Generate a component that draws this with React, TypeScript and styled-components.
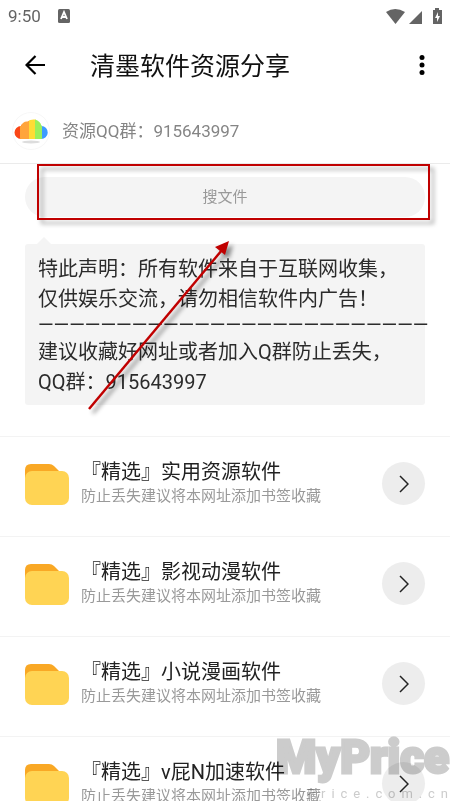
import React from "react";
import styled, { createGlobalStyle } from "styled-components";

const GlobalStyle = createGlobalStyle`
  * { box-sizing: border-box; }
  body { margin: 0; background: #fff; color: #222; font-family: Roboto, "Noto Sans CJK SC", sans-serif; }
  button, input { font-family: inherit; }
`;

const Screen = styled.div`
  position: relative;
  display: flex;
  flex-direction: column;
  height: 100vh;
  overflow: hidden;
`;

const StatusBar = styled.div`
  display: flex;
  align-items: center;
  justify-content: space-between;
  flex: none;
  height: 30px;
  padding: 2px 8px 0;
  color: #646464;
  font-size: 17px;
  line-height: 20px;
`;

const StatusGroup = styled.div<{ $gap: number }>`
  display: flex;
  align-items: center;
  gap: ${(p) => p.$gap}px;
`;

const AppBar = styled.header`
  display: flex;
  align-items: center;
  flex: none;
  height: 70px;
  padding: 0 16px 0 20px;
`;

const IconButton = styled.button`
  display: flex;
  align-items: center;
  justify-content: center;
  width: 24px;
  height: 40px;
  padding: 0;
  border: 0;
  background: none;
  color: #000;
  cursor: pointer;
`;

const BackButton = styled(IconButton)`
  width: 30px;
`;

const Title = styled.h1`
  flex: 1;
  margin: 0 0 0 40px;
  padding-top: 3px;
  color: #111;
  font-size: 25px;
  font-weight: 400;
  line-height: 36px;
`;

const Content = styled.main`
  position: relative;
  flex: 1;
  overflow-y: auto;
  scrollbar-width: none;
`;

const GroupRow = styled.div`
  display: flex;
  align-items: center;
  gap: 12px;
  height: 64px;
  padding: 0 12px 2px;
  border-bottom: 1px solid #ebebeb;
  color: #858585;
  font-size: 17px;
  line-height: 24px;
`;

const SearchInput = styled.input`
  display: block;
  width: calc(100% - 50px);
  height: 40px;
  margin: 13px 25px 0;
  border: 0;
  border-radius: 20px;
  background: #f4f4f4;
  color: #333;
  font-size: 15px;
  text-align: center;
  outline: none;
  &::placeholder { color: #999; opacity: 1; }
`;

const Notice = styled.section`
  position: relative;
  margin: 27px 25px 31px;
  padding: 10px 12px 8px 13px;
  border-radius: 3px;
  background: #f4f4f4;
  color: #2b2b2b;
  font-size: 20px;
  line-height: 30px;
  white-space: nowrap;
  &::before {
    content: "";
    position: absolute;
    left: 11px;
    top: -7px;
    border: solid transparent;
    border-width: 0 8px 8px;
    border-bottom-color: #f4f4f4;
  }
`;

const NoticeLine = styled.p<{ $rule?: boolean }>`
  margin: 0;
  line-height: ${(p) => (p.$rule ? 23 : 30)}px;
`;

const List = styled.ul`
  margin: 0;
  padding: 0;
  list-style: none;
`;

const Item = styled.li`
  display: flex;
  align-items: center;
  height: 100px;
  padding: 0 25px 6px;
  border-top: 1px solid #f3f3f3;
`;

const ItemText = styled.div`
  flex: 1;
  min-width: 0;
  margin-left: 12px;
  padding-bottom: 4px;
  white-space: nowrap;
`;

const ItemTitle = styled.h2`
  margin: 0;
  color: #222;
  font-size: 20px;
  font-weight: 400;
  line-height: 28px;
`;

const ItemNote = styled.p`
  margin: 0;
  color: #999;
  font-size: 15px;
  line-height: 20px;
`;

const OpenButton = styled.button`
  display: flex;
  align-items: center;
  justify-content: center;
  width: 43px;
  height: 43px;
  padding: 0;
  border: 0;
  border-radius: 50%;
  background: #ededed;
  color: #222;
  cursor: pointer;
`;

const Highlight = styled.div`
  position: absolute;
  top: 64px;
  left: 37px;
  right: 20px;
  height: 56px;
  border: 2px solid #c00000;
  filter: drop-shadow(4px 4px 2px rgba(0, 0, 0, 0.35));
  pointer-events: none;
`;

const Pointer = styled.svg`
  position: absolute;
  top: 136px;
  left: 84px;
  pointer-events: none;
  filter: drop-shadow(4px 4px 2px rgba(0, 0, 0, 0.45));
`;

const Watermark = styled.div`
  position: absolute;
  right: 0;
  bottom: 0;
  width: 174px;
  color: #cccccc;
  mix-blend-mode: multiply;
  pointer-events: none;
`;

const WatermarkName = styled.div`
  font-family: Roboto, sans-serif;
  font-size: 46px;
  font-weight: 900;
  line-height: 60px;
  white-space: nowrap;
  -webkit-text-stroke: 3px #cccccc;
`;

const WatermarkSite = styled.div`
  display: flex;
  justify-content: space-between;
  padding: 0 2px 0 31px;
  font-size: 13px;
  line-height: 14px;
`;

const FolderIcon = () => (
  <svg width="44" height="42" viewBox="0 0 44 42" aria-hidden="true">
    <path d="M0 20V7Q0 1 6 1H24Q27 1 29 3L36 10V20Z" fill="#f9a825" />
    <rect y="8" width="44" height="34" rx="7" fill="#ffd454" />
  </svg>
);

const CloudLogo = () => (
  <svg width="38" height="38" viewBox="0 0 38 38" aria-hidden="true">
    <defs>
      <clipPath id="cloud">
        <path d="M9 27A6.500 6.500 0 0 1 9 14Q11 9 15.500 9.500Q18.500 7 23 7.500Q28.500 9 29.500 14A6.500 6.500 0 0 1 29 27Z" />
      </clipPath>
    </defs>
    <circle cx="19" cy="19" r="18.500" fill="#fff" stroke="#f7f7f7" />
    <ellipse cx="19" cy="30" rx="9" ry="1.500" fill="#ddd" />
    <g clipPath="url(#cloud)">
      <rect width="10" height="38" fill="#fa4616" />
      <rect x="8" y="8" width="10" height="22" rx="2" fill="#ffa53b" />
      <rect x="17" width="7" height="38" fill="#ffdc35" />
      <rect x="29" width="9" height="38" fill="#3d9bff" />
      <path d="M23 0H27Q30 6 30 13V27H23Z" fill="#9bf05a" />
    </g>
  </svg>
);

const items = ["实用资源软件", "影视动漫软件", "小说漫画软件", "v屁N加速软件"];

export default function App() {
  return (
    <Screen>
      <GlobalStyle />
      <StatusBar>
        <StatusGroup $gap={17}>
          <span>9:50</span>
          <svg width="12" height="14" viewBox="0 0 12 14" aria-hidden="true">
            <rect width="12" height="14" rx="1.500" fill="#646464" />
            <path d="M3 10L6 3L9 10M4 8H8" fill="none" stroke="#fff" strokeWidth="1.800" />
          </svg>
        </StatusGroup>
        <svg width="57" height="17" viewBox="0 0 57 17" fill="#646464" aria-hidden="true">
          <path d="M1 4Q10 -2 20 4L10.500 16Z" />
          <path d="M24 16L37 3V16Z" />
          <path fillRule="evenodd" d="M50 0H54V2H57V16H48V2H50ZM53 4L50 10H52V14L55 8H53Z" />
        </svg>
      </StatusBar>
      <AppBar>
        <BackButton aria-label="返回">
          <svg width="20" height="20" viewBox="0 0 20 20" fill="none" stroke="currentColor" strokeWidth="2.200">
            <path d="M20 10H2M10.500 1L1.500 10L10.500 19" />
          </svg>
        </BackButton>
        <Title>清墨软件资源分享</Title>
        <IconButton aria-label="更多">
          <svg width="6" height="20" viewBox="0 0 6 20" fill="currentColor">
            <circle cx="3" cy="2.500" r="2.500" />
            <circle cx="3" cy="10" r="2.500" />
            <circle cx="3" cy="17.500" r="2.500" />
          </svg>
        </IconButton>
      </AppBar>
      <Content>
        <GroupRow>
          <CloudLogo />
          <span>资源QQ群：915643997</span>
        </GroupRow>
        <SearchInput type="text" placeholder="搜文件" aria-label="搜文件" />
        <Notice>
          <NoticeLine>特此声明：所有软件来自于互联网收集，</NoticeLine>
          <NoticeLine>仅供娱乐交流，请勿相信软件内广告！</NoticeLine>
          <NoticeLine $rule>{"—".repeat(25)}</NoticeLine>
          <NoticeLine>建议收藏好网址或者加入Q群防止丢失，</NoticeLine>
          <NoticeLine>QQ群：915643997</NoticeLine>
        </Notice>
        <List>
          {items.map((name) => (
            <Item key={name}>
              <FolderIcon />
              <ItemText>
                <ItemTitle>『精选』{name}</ItemTitle>
                <ItemNote>防止丢失建议将本网址添加书签收藏</ItemNote>
              </ItemText>
              <OpenButton aria-label={`打开${name}`}>
                <svg width="10" height="18" viewBox="0 0 10 18" fill="none" stroke="currentColor" strokeWidth="1.500">
                  <path d="M1 1L9 9L1 17" />
                </svg>
              </OpenButton>
            </Item>
          ))}
        </List>
        <Highlight />
        <Pointer width="150" height="180" viewBox="0 0 150 180" aria-hidden="true">
          <path d="M5 173L138 14" stroke="#c00000" strokeWidth="2.500" />
          <path d="M145 5L141 19L131 11Z" fill="#c00000" />
        </Pointer>
      </Content>
      <Watermark aria-hidden="true">
        <WatermarkName>MyPrice</WatermarkName>
        <WatermarkSite>
          {"Price.com.cn".split("").map((c, i) => (
            <span key={i}>{c}</span>
          ))}
        </WatermarkSite>
      </Watermark>
    </Screen>
  );
}
